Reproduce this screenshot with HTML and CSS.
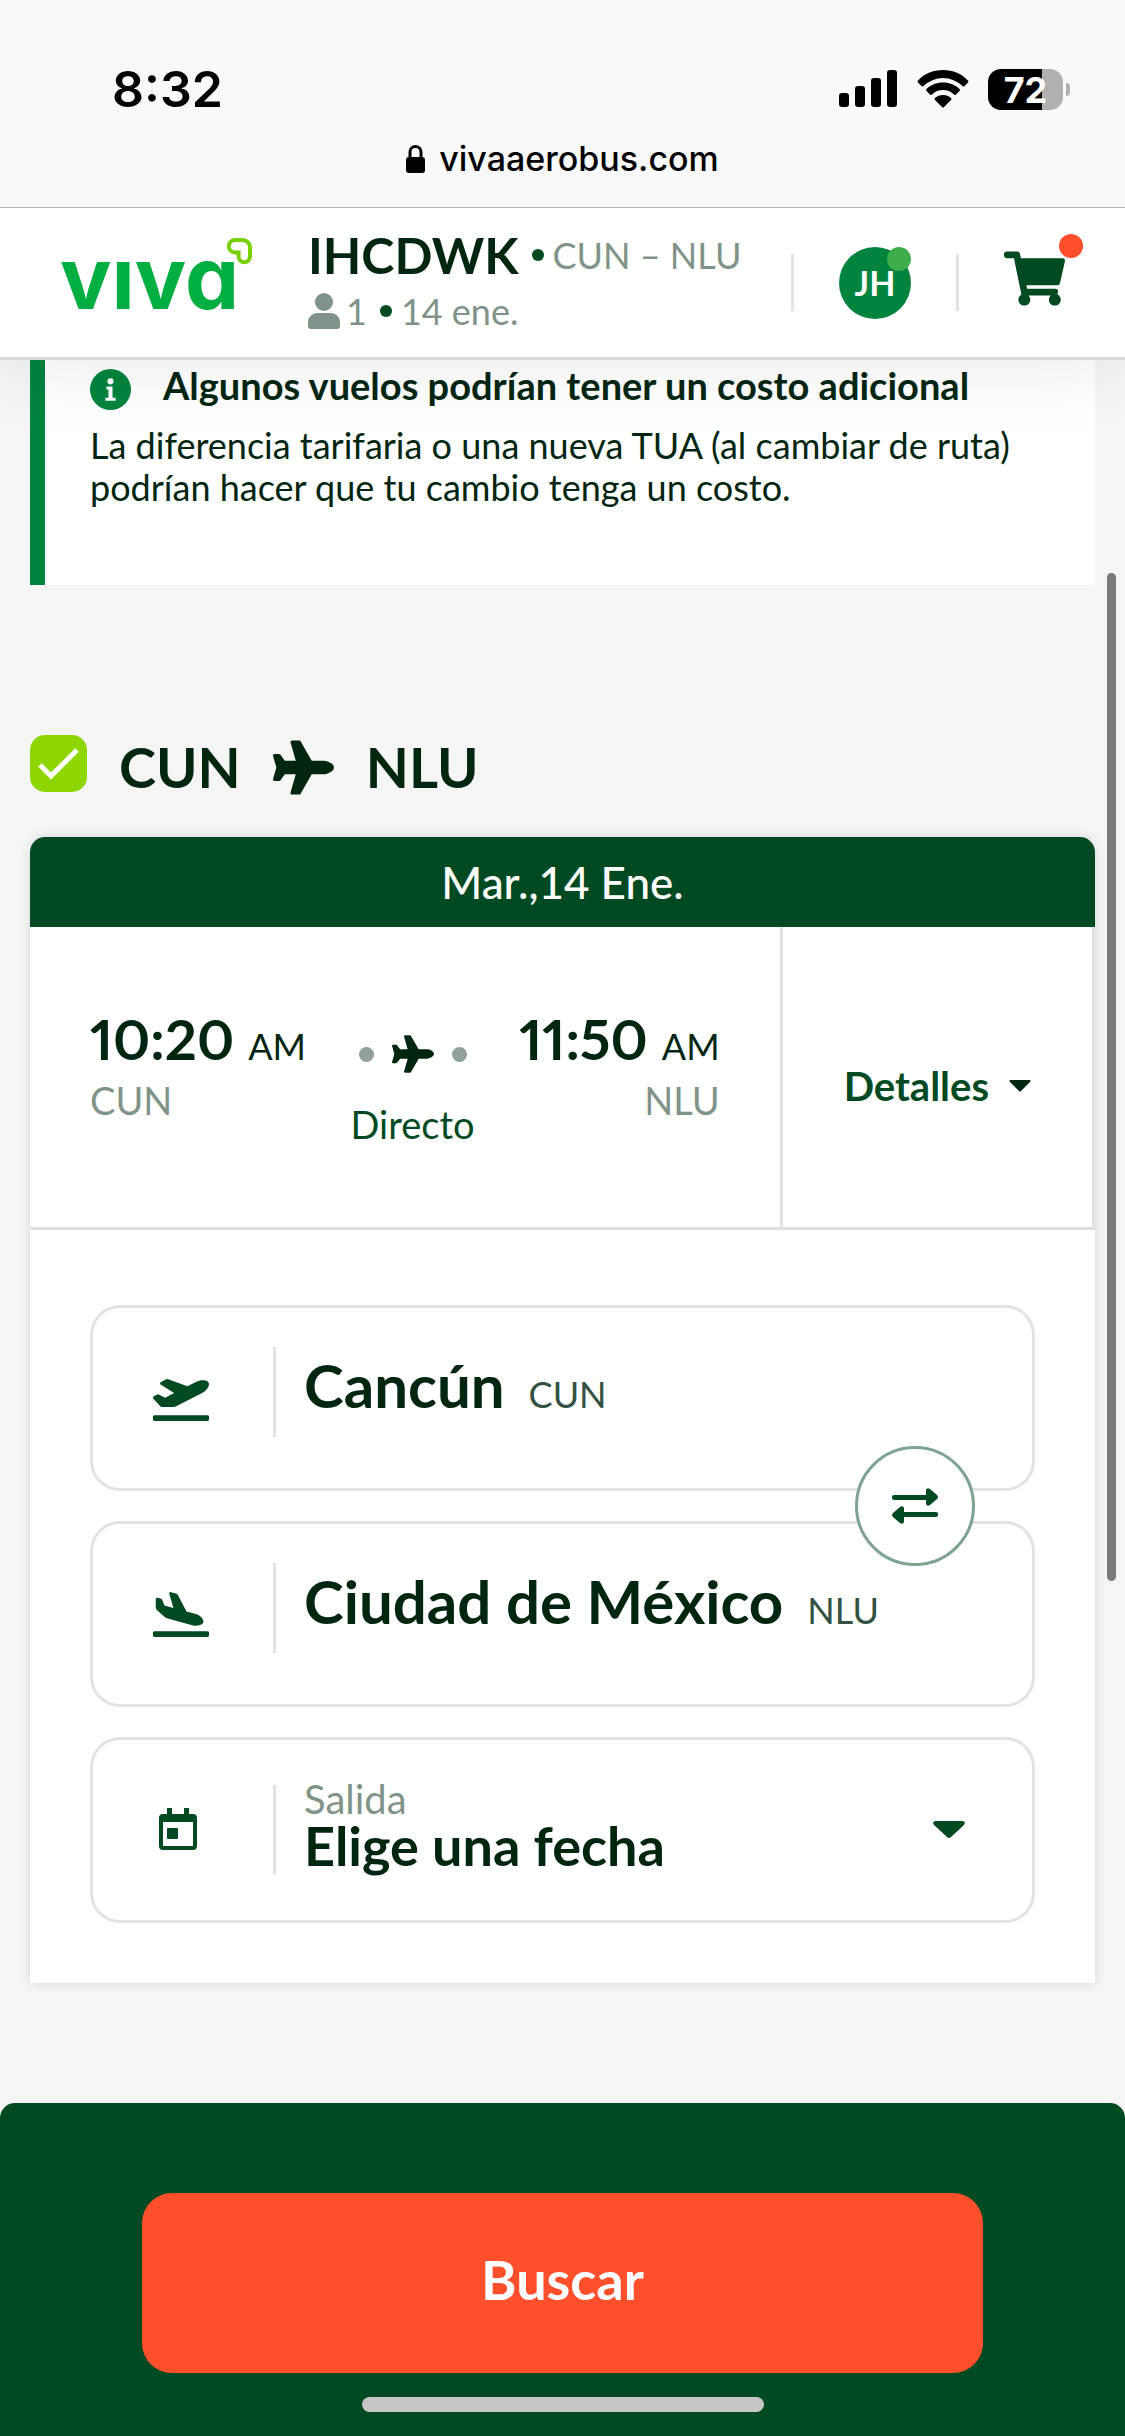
FILE: index.html
```html
<!DOCTYPE html>
<html lang="es">
<head>
<meta charset="utf-8">
<meta name="viewport" content="width=device-width, initial-scale=1">
<title>Viva Aerobus</title>
<link rel="stylesheet" href="styles.css">
</head>
<body>
<div class="statusbar">
  <div class="status-row">
    <span class="clock">8:32</span>
    <div class="status-icons">
      <svg class="signal" viewBox="0 0 59 38" aria-hidden="true"><rect x="0" y="23" width="10" height="14" rx="3"/><rect x="16" y="16" width="10" height="21" rx="3"/><rect x="32" y="8" width="10" height="29" rx="3"/><rect x="48" y="0" width="10" height="37" rx="3"/></svg>
      <svg class="wifi" viewBox="0 0 52 38" aria-hidden="true"><path d="M26 0C36 0 45 4 51 10.500Q52 11.500 51 12.500L47.500 16Q46.500 17 45.500 16A28 28 0 0 0 6.500 16Q5.500 17 4.500 16L1 12.500Q0 11.500 1 10.500C7 4 16 0 26 0Z"/><path d="M26 12.500C32.500 12.500 38.500 15 42.500 19Q43.500 20 42.500 21L39 24.500Q38 25.500 37 24.500A16 16 0 0 0 15 24.500Q14 25.500 13 24.500L9.500 21Q8.500 20 9.500 19C13.500 15 19.500 12.500 26 12.500Z"/><path d="M26 25C29 25 32 26 34 28Q35 29 34 30L27 37Q26 38 25 37L18 30Q17 29 18 28C20 26 23 25 26 25Z"/></svg>
      <div class="battery"><span class="battery-level">72</span></div>
    </div>
  </div>
  <div class="address">
    <svg class="lock" viewBox="0 0 19 28" aria-hidden="true"><rect x="0" y="12" width="19" height="16" rx="3"/><path d="M4 13V7a5.500 5.500 0 0 1 11 0v6" fill="none" stroke="#000" stroke-width="3"/></svg>
    <span>vivaaerobus.com</span>
  </div>
</div>

<header class="topbar">
  <a class="logo" href="#" aria-label="viva">
    <svg viewBox="0 0 192 74" aria-hidden="true">
      <text class="wordmark" x="0" y="72">vıva</text>
      <path d="M175 3h7.500a7.500 7.500 0 0 1 7.500 7.500v9a5.700 5.700 0 0 1-11.400 0V15.500h-3.600a6.200 6.200 0 0 1 0-12.500z" fill="none" stroke="#78d000" stroke-width="4"/>
    </svg>
  </a>
  <div class="booking">
    <div class="booking-row"><strong class="pnr">IHCDWK</strong><i class="bullet"></i><span>CUN – NLU</span></div>
    <div class="booking-row">
      <svg class="user" viewBox="0 0 32 36" aria-hidden="true"><circle cx="16" cy="9" r="9"/><path d="M9 20h14a9 9 0 0 1 9 9v4q0 3-3 3H3q-3 0-3-3v-4a9 9 0 0 1 9-9z"/></svg>
      <span>1</span><i class="bullet"></i><span>14 ene.</span>
    </div>
  </div>
  <div class="actions">
    <i class="rule"></i>
    <button class="avatar" type="button">JH<i class="badge badge-online"></i></button>
    <i class="rule"></i>
    <button class="cart" type="button" aria-label="Carrito">
      <svg viewBox="0 0 576 512" aria-hidden="true"><path d="M528.120 301.319l47.273-208C578.806 78.301 567.391 64 551.990 64H159.208l-9.166-44.810C147.758 8.021 137.930 0 126.529 0H24C10.745 0 0 10.745 0 24v16c0 13.255 10.745 24 24 24h69.883l70.248 343.435C147.325 417.100 136 435.222 136 456c0 30.928 25.072 56 56 56s56-25.072 56-56c0-15.674-6.447-29.835-16.824-40h209.647C430.447 426.165 424 440.326 424 456c0 30.928 25.072 56 56 56s56-25.072 56-56c0-22.172-12.888-41.332-31.579-50.405l5.517-24.276c3.413-15.018-8.002-29.319-23.403-29.319H218.117l-6.545-32h293.145c11.206 0 20.920-7.754 23.403-18.681z"/></svg>
      <i class="badge badge-cart"></i>
    </button>
  </div>
</header>

<main class="content">
  <section class="notice">
    <h2 class="notice-title">
      <svg class="info" viewBox="0 0 40 40" aria-hidden="true"><circle cx="20" cy="20" r="20" fill="#00843d"/><circle cx="20" cy="12" r="3" fill="#fff"/><path d="M16 17h6v11h3v3H15v-3h3v-8h-2z" fill="#fff"/></svg>
      Algunos vuelos podrían tener un costo adicional
    </h2>
    <p class="notice-text">La diferencia tarifaria o una nueva TUA (al cambiar de ruta) podrían hacer que tu cambio tenga un costo.</p>
  </section>

  <label class="route">
    <span class="check">
      <input type="checkbox" checked>
      <svg viewBox="0 0 57 57" aria-hidden="true"><path d="M10 30l11 11L47 15" fill="none" stroke="#fff" stroke-width="5"/></svg>
    </span>
    <span>CUN</span>
    <svg class="route-plane" viewBox="0 0 576 512" aria-hidden="true"><path id="plane" d="M480 192H365.710L260.610 8.060A16.014 16.014 0 0 0 246.710 0h-65.500c-10.630 0-18.300 10.170-15.380 20.390L214.860 192H112l-43.200-57.600c-3.020-4.030-7.770-6.400-12.800-6.400H16.010C5.600 128-2.040 137.780.49 147.880L32 256 .49 364.120C-2.040 374.220 5.600 384 16.010 384H56c5.040 0 9.780-2.370 12.800-6.400L112 320h102.860l-49.030 171.600c-2.920 10.220 4.750 20.400 15.380 20.400h65.500c5.740 0 11.040-3.080 13.890-8.060L365.710 320H480c35.350 0 96-28.650 96-64s-60.650-64-96-64z"/></svg>
    <span>NLU</span>
  </label>

  <section class="card">
    <h3 class="card-date">Mar.,14 Ene.</h3>
    <div class="flight">
      <div class="flight-info">
        <div class="stop">
          <div class="time"><strong>10:20</strong><span>AM</span></div>
          <div class="code">CUN</div>
        </div>
        <div class="leg">
          <div class="leg-line"><i></i><svg viewBox="0 0 576 512" aria-hidden="true"><use href="#plane"/></svg><i></i></div>
          <div class="leg-type">Directo</div>
        </div>
        <div class="stop stop-end">
          <div class="time"><strong>11:50</strong><span>AM</span></div>
          <div class="code">NLU</div>
        </div>
      </div>
      <button class="details" type="button">Detalles
        <svg viewBox="0 0 22 12" aria-hidden="true"><path d="M1 0h20q1 1 0 2l-9 9q-1 1-2 0L1 2q-1-1 0-2z"/></svg>
      </button>
    </div>

    <form class="search" id="search">
      <button class="field" type="button">
        <span class="field-icon"><svg class="airport" viewBox="0 0 640 512" aria-hidden="true"><path d="M624 448H16c-8.840 0-16 7.160-16 16v32c0 8.840 7.160 16 16 16h608c8.840 0 16-7.160 16-16v-32c0-8.840-7.160-16-16-16zM80.550 341.270c6.280 6.840 15.100 10.720 24.330 10.710l130.540-.18a65.620 65.620 0 0 0 29.640-7.120l290.960-147.650c26.740-13.570 50.710-32.940 67.020-58.310 18.310-28.480 20.300-49.090 13.070-63.650-7.210-14.570-24.740-25.270-58.250-27.450-29.850-1.940-59.540 5.920-86.280 19.480l-98.510 49.990-218.700-82.060a17.799 17.799 0 0 0-18-1.110L90.620 67.290c-10.670 5.410-13.250 19.650-5.170 28.530l156.220 98.100-103.210 52.370-72.350-36.470a17.804 17.804 0 0 0-16.070.02L9.910 230.220c-10.440 5.300-13.190 19.120-5.570 28.080l76.210 82.970z"/></svg></span>
        <span class="field-place"><strong>Cancún</strong><small>CUN</small></span>
      </button>
      <button class="swap" type="button" aria-label="Intercambiar">
        <svg viewBox="0 0 46 36" aria-hidden="true"><path d="M2 7h32V2q1-3 4-1l7 6q2 2 0 4l-7 6q-3 2-4-1v-4H2q-2 0-2-2V9q0-2 2-2z"/><path d="M44 24H12v-4q-1-3-4-1l-7 6q-2 2 0 4l7 6q3 2 4-1v-5h32q2 0 2-2v-1q0-2-2-2z"/></svg>
      </button>
      <button class="field" type="button">
        <span class="field-icon"><svg class="airport" viewBox="0 0 640 512" aria-hidden="true"><path d="M624 448H16c-8.840 0-16 7.160-16 16v32c0 8.840 7.160 16 16 16h608c8.840 0 16-7.160 16-16v-32c0-8.840-7.160-16-16-16zM44.810 205.660l88.740 80a62.607 62.607 0 0 0 25.470 13.930l287.600 78.350c26.480 7.210 54.560 8.720 81 1.360 29.670-8.270 43.440-21.210 47.250-35.710 3.830-14.500-1.730-32.710-23.370-54.960-19.280-19.820-44.350-32.790-70.830-40l-97.510-26.560L282.800 30.220c-1.510-5.810-5.950-10.350-11.660-11.910L206.050.58c-10.560-2.880-20.900 5.320-20.710 16.440l47.920 164.210-102.200-27.840-27.590-67.880c-1.930-4.890-6.010-8.570-11.020-9.930L52.720 64.750c-10.340-2.820-20.530 5-20.720 15.880l.23 101.780c.19 8.910 6.030 17.340 12.580 23.250z"/></svg></span>
        <span class="field-place"><strong>Ciudad de México</strong><small>NLU</small></span>
      </button>
      <button class="field field-date" type="button">
        <span class="field-icon"><svg class="calendar" viewBox="0 0 38 44" aria-hidden="true"><path fill-rule="evenodd" d="M8 0h5v6h12V0h5v6h4q4 0 4 4v28q0 4-4 4H4q-4 0-4-4V10q0-4 4-4h4zM4 14v24h30V14z"/><rect x="8" y="20" width="11" height="11" rx="1"/></svg></span>
        <span class="field-date-text"><span>Salida</span><strong>Elige una fecha</strong></span>
        <svg class="caret" viewBox="0 0 32 18" aria-hidden="true"><path d="M2 0h28q3 1 1 4L18 16q-2 2-4 0L1 4Q-1 1 2 0z"/></svg>
      </button>
    </form>
  </section>
</main>

<footer class="bottom">
  <button class="submit" type="submit" form="search">Buscar</button>
  <div class="home-indicator"></div>
</footer>
<div class="scroll-thumb"></div>
</body>
</html>
```
FILE: styles.css
```css
* { box-sizing: border-box; }
body {
  position: relative;
  display: flex;
  flex-direction: column;
  min-height: 100vh;
  margin: 0;
  background: #f5f5f5;
  color: #002612;
  font-family: Lato, "Liberation Sans", sans-serif;
  font-size: 38px;
  line-height: 50px;
}
button {
  margin: 0;
  padding: 0;
  border: 0;
  background: none;
  color: inherit;
  font: inherit;
  text-align: left;
}
h2, h3, p { margin: 0; }
svg { display: block; flex: none; fill: currentColor; overflow: visible; }

/* Status bar */
.statusbar {
  position: relative;
  z-index: 2;
  padding-top: 60px;
  padding-bottom: 14px;
  border-bottom: 1px solid #b2b2b2;
  background: #f9f9f9;
  color: #000;
  font-family: Inter, "Liberation Sans", sans-serif;
}
.status-row {
  display: flex;
  justify-content: space-between;
  align-items: center;
  height: 58px;
  padding: 0 55px 0 112px;
}
.clock { font-size: 50px; font-weight: 600; }
.status-icons { display: flex; align-items: center; gap: 19px; }
.signal { width: 59px; height: 38px; }
.wifi { width: 52px; height: 38px; }
.battery {
  position: relative;
  width: 75px;
  height: 41px;
  margin-right: 7px;
  border-radius: 13px;
  background: linear-gradient(90deg, #000 72%, #b0b0b0 72%);
  color: #fff;
  font-size: 36px;
  font-weight: 700;
  line-height: 42px;
  text-align: center;
}
.battery::after {
  content: "";
  position: absolute;
  top: 14px;
  right: -7px;
  width: 4px;
  height: 13px;
  border-radius: 0 4px 4px 0;
  background: #b0b0b0;
}
.address {
  display: flex;
  justify-content: center;
  align-items: center;
  gap: 14px;
  height: 75px;
  padding-top: 6px;
  font-size: 34px;
  font-weight: 500;
}
.lock { width: 19px; height: 28px; }

/* Top bar */
.topbar {
  position: relative;
  z-index: 1;
  display: flex;
  align-items: center;
  min-height: 152px;
  padding: 0 60px;
  border-bottom: 3px solid #d9d9d9;
  background: #fff;
  box-shadow: 0 0 80px rgba(0, 0, 0, 0.1);
  color: #7f9388;
  font-size: 36px;
}
.logo { width: 192px; margin-right: 56px; padding-bottom: 18px; }
.wordmark {
  fill: #00ae42;
  font-family: Inter, sans-serif;
  font-size: 86px;
  font-weight: 700;
  font-feature-settings: "cv11";
}
.booking-row { display: flex; align-items: center; height: 56px; }
.pnr { color: #002612; font-size: 50px; }
.bullet {
  width: 12px;
  height: 12px;
  margin: 0 9px 0 13px;
  border-radius: 50%;
  background: #004a23;
}
.user { width: 32px; height: 36px; margin-right: 6px; }
.actions { display: flex; align-items: center; gap: 45px; margin-left: auto; }
.rule { width: 3px; height: 57px; background: #e3e3e3; }
.avatar, .cart { position: relative; height: 72px; }
.avatar {
  width: 72px;
  border-radius: 50%;
  background: #00843d;
  color: #fff;
  font-size: 34px;
  font-weight: 700;
  text-align: center;
}
.cart { width: 61px; color: #004a23; }
.cart svg { width: 61px; height: 55px; margin-bottom: 8px; }
.badge {
  position: absolute;
  top: 0;
  right: 0;
  width: 24px;
  height: 24px;
  border-radius: 50%;
}
.badge-online { background: #3dae4a; }
.badge-cart { top: -13px; right: -18px; background: #ff4f2b; }

/* Content */
.content { padding: 0 30px 120px; }
.notice {
  padding: 0 45px 77px;
  border-left: 15px solid #00843d;
  background: #fff;
}
.notice-title {
  display: flex;
  align-items: flex-end;
  gap: 32px;
  font-size: 38px;
  line-height: 50px;
}
.info { width: 41px; height: 41px; }
.notice-text { margin-top: 14px; font-size: 36px; line-height: 42px; }

.route {
  display: flex;
  align-items: center;
  gap: 32px;
  height: 64px;
  margin: 150px 0 38px;
  font-size: 56px;
  font-weight: 700;
}
.check { display: grid; align-self: flex-start; }
.check input, .check svg { grid-area: 1 / 1; width: 57px; height: 57px; }
.check input {
  margin: 0;
  border-radius: 15px;
  background: #8ed600;
  appearance: none;
}
.check svg { pointer-events: none; }
.route-plane { width: 61px; height: 55px; }

.card {
  border-radius: 15px 15px 0 0;
  background: #fff;
  box-shadow: 0 0 12px rgba(0, 0, 0, 0.12);
}
.card-date {
  border-radius: 15px 15px 0 0;
  background: #004a23;
  color: #fff;
  font-size: 44px;
  font-weight: 500;
  line-height: 90px;
  text-align: center;
}
.flight {
  display: flex;
  border-right: 3px solid #e0e0e0;
  border-bottom: 3px solid #e0e0e0;
}
.flight-info {
  display: flex;
  flex: 1;
  justify-content: space-between;
  min-height: 300px;
  padding: 76px 60px 0;
}
.time {
  display: flex;
  align-items: baseline;
  gap: 14px;
  font-size: 36px;
  font-variant-numeric: proportional-nums;
}
.time strong { font-size: 56px; line-height: 72px; }
.code { color: #7f9388; }
.stop-end { text-align: right; }
.leg {
  display: flex;
  flex-direction: column;
  align-items: center;
  gap: 26px;
  padding-top: 32px;
}
.leg-line { display: flex; align-items: center; gap: 18px; }
.leg-line svg { width: 42px; height: 38px; }
.leg-line i { width: 15px; height: 15px; border-radius: 50%; background: #91a199; }
.leg-type { color: #004a23; }
.details {
  display: flex;
  align-items: center;
  gap: 20px;
  padding: 18px 61px 0;
  border-left: 3px solid #e3e3e3;
  color: #004a23;
  font-size: 40px;
  font-weight: 700;
}
.details svg { width: 22px; height: 12px; color: #002612; }

.search {
  position: relative;
  display: grid;
  gap: 30px;
  padding: 75px 60px 60px;
}
.field {
  display: flex;
  align-items: center;
  width: 100%;
  min-height: 186px;
  border: 3px solid #e3e3e3;
  border-radius: 30px;
}
.field-icon {
  display: flex;
  align-items: center;
  width: 183px;
  height: 90px;
  margin: 0 28px 12px 0;
  padding-left: 60px;
  border-right: 3px solid #e3e3e3;
  color: #004a23;
}
.airport { width: 56px; height: 45px; margin-top: 12px; }
.field-place {
  display: flex;
  align-items: baseline;
  gap: 24px;
  padding-bottom: 26px;
}
.field-place strong { font-size: 60px; line-height: 72px; }
.field-place small { color: #335142; font-size: 36px; }
.field-date .field-icon { margin-bottom: 0; padding-left: 66px; }
.calendar { width: 38px; height: 44px; }
.field-date-text { display: grid; padding-bottom: 12px; }
.field-date-text span { color: #7f9388; font-size: 40px; line-height: 44px; }
.field-date-text strong { font-size: 54px; line-height: 50px; }
.caret { width: 32px; height: 18px; margin: 0 67px 0 auto; color: #004a23; }
.swap {
  position: absolute;
  top: 216px;
  right: 120px;
  display: grid;
  place-items: center;
  width: 120px;
  height: 120px;
  border: 3px solid #7ea38f;
  border-radius: 50%;
  background: #fff;
  color: #004a23;
}
.swap svg { width: 46px; height: 36px; }

/* Bottom bar */
.bottom {
  display: grid;
  justify-items: center;
  gap: 24px;
  margin-top: auto;
  padding: 90px 142px 24px;
  border-radius: 15px 15px 0 0;
  background: #004a23;
}
.submit {
  width: 100%;
  height: 180px;
  padding-bottom: 6px;
  border-radius: 30px;
  background: #ff4f2b;
  color: #fff;
  font-size: 54px;
  font-weight: 700;
  text-align: center;
}
.home-indicator {
  width: 402px;
  height: 15px;
  border-radius: 8px;
  background: #c7c7c7;
}
.scroll-thumb {
  position: absolute;
  top: 573px;
  right: 9px;
  width: 9px;
  height: 1008px;
  border-radius: 5px;
  background: #7a7a7a;
}
```
